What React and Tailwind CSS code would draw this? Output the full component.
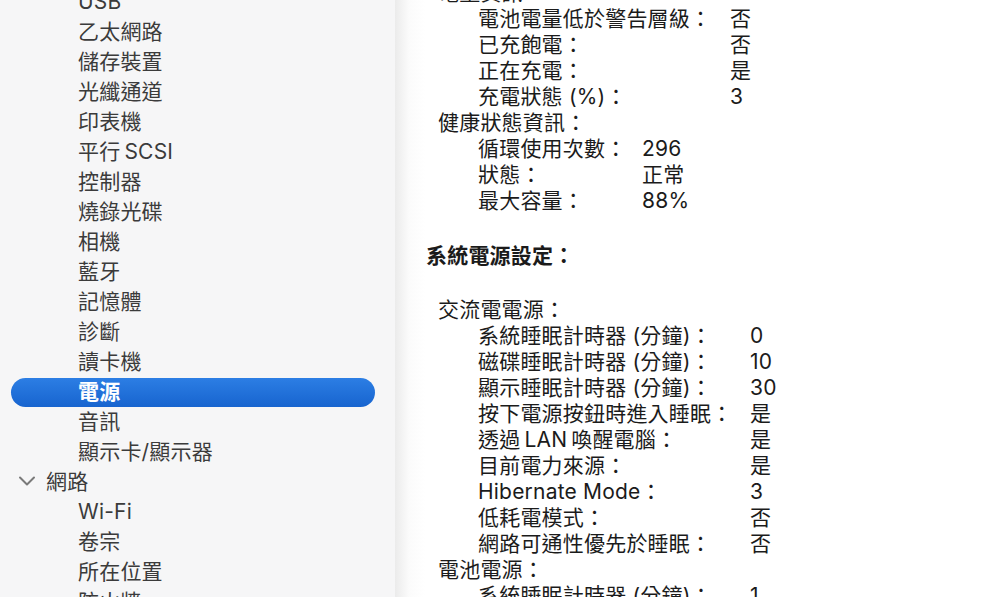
import React from 'react';
import { ChevronDown } from 'lucide-react';

const FONT = { fontFamily: 'Inter, "Noto Sans CJK TC", sans-serif' };

// sidebar entries, first one is scrolled half out of view
const sidebarItems = [
  { label: 'USB' },
  { label: '乙太網路' },
  { label: '儲存裝置' },
  { label: '光纖通道' },
  { label: '印表機' },
  { label: '平行\u2009SCSI' },
  { label: '控制器' },
  { label: '燒錄光碟' },
  { label: '相機' },
  { label: '藍牙' },
  { label: '記憶體' },
  { label: '診斷' },
  { label: '讀卡機' },
  { label: '電源', selected: true },
  { label: '音訊' },
  { label: '顯示卡/顯示器' },
  { label: '網路', group: true },
  { label: 'Wi-Fi' },
  { label: '卷宗' },
  { label: '所在位置' },
  { label: '防火牆' },
];

const chargeInfo = [
  ['電池電量低於警告層級：', '否'],
  ['已充飽電：', '否'],
  ['正在充電：', '是'],
  ['充電狀態 (%)：', '3'],
];

const healthInfo = [
  ['循環使用次數：', '296'],
  ['狀態：', '正常'],
  ['最大容量：', '88%'],
];

const acPower = [
  ['系統睡眠計時器 (分鐘)：', '0'],
  ['磁碟睡眠計時器 (分鐘)：', '10'],
  ['顯示睡眠計時器 (分鐘)：', '30'],
  ['按下電源按鈕時進入睡眠：', '是'],
  ['透過\u2009LAN\u2009喚醒電腦：', '是'],
  ['目前電力來源：', '是'],
  ['Hibernate Mode：', '3'],
  ['低耗電模式：', '否'],
  ['網路可通性優先於睡眠：', '否'],
];

const batteryPower = [['系統睡眠計時器 (分鐘)：', '1']];

function SidebarRow({ item }) {
  if (item.selected) {
    return (
      <li className="h-[30px] flex items-center">
        <div className="ml-[11px] w-[364px] h-[29px] rounded-full bg-gradient-to-b from-[#2c7ee4] to-[#1764cf] flex items-center pl-[67px] text-white font-bold">
          {item.label}
        </div>
      </li>
    );
  }
  if (item.group) {
    return (
      <li className="h-[30px] flex items-center pl-[13px]">
        <ChevronDown className="w-[28px] h-[28px] text-[#7a7a7a] -mt-[2px]" strokeWidth={1.7} />
        <span className="ml-[5px]">{item.label}</span>
      </li>
    );
  }
  return <li className="h-[30px] flex items-center pl-[78px]">{item.label}</li>;
}

function InfoRows({ rows, labelWidth }) {
  return (
    <div className="pl-[52px]">
      {rows.map(([label, value]) => (
        <div key={label} className="flex h-[26px] items-center">
          <span className="shrink-0 whitespace-nowrap" style={{ width: labelWidth }}>{label}</span>
          <span>{value}</span>
        </div>
      ))}
    </div>
  );
}

function Heading({ children }) {
  return <div className="pl-[12px] h-[26px] flex items-center">{children}</div>;
}

export default function App() {
  return (
    <div className="flex w-[988px] h-[597px] overflow-hidden text-[21px] tracking-[0.2px]" style={FONT}>
      {/* source list */}
      <aside className="w-[395px] shrink-0 bg-[#f6f6f7] text-[#3b3b3b]">
        <ul className="-mt-[13px]">
          {sidebarItems.map((item) => (
            <SidebarRow key={item.label} item={item} />
          ))}
        </ul>
      </aside>

      {/* detail pane */}
      <main className="flex-1 bg-[linear-gradient(to_right,#ebebeb,#fbfbfb_14px,#ffffff_30px)] text-[#1b1b1b] pl-[31px]">
        <div className="-mt-[20px]">
          <Heading>電量資訊：</Heading>
          <InfoRows rows={chargeInfo} labelWidth={252} />
          <Heading>健康狀態資訊：</Heading>
          <InfoRows rows={healthInfo} labelWidth={164} />

          <div className="mt-[29px] h-[26px] flex items-center font-bold">系統電源設定：</div>

          <div className="mt-[28px]">
            <Heading>交流電電源：</Heading>
            <InfoRows rows={acPower} labelWidth={272} />
            <Heading>電池電源：</Heading>
            <InfoRows rows={batteryPower} labelWidth={272} />
          </div>
        </div>
      </main>
    </div>
  );
}
